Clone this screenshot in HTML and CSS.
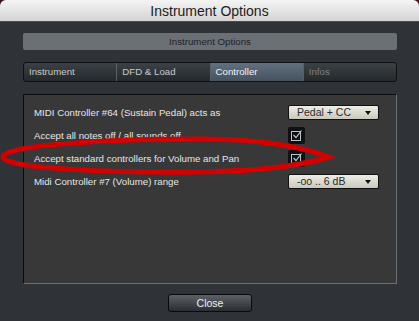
FILE: index.html
```html
<!DOCTYPE html>
<html lang="en">
<head>
    <meta charset="UTF-8">
    <title>Instrument Options</title>
    <link rel="stylesheet" href="styles.css">
</head>
<body>
<div class=window>
    <div class=titlebar>Instrument Options</div>
    <div class=content>
        <div class=header>Instrument Options</div>
        <div class=tabs>
            <div class=tab>Instrument</div>
            <div class=tab>DFD &amp; Load</div>
            <div class="tab active">Controller</div>
            <div class="tab dim">Infos</div>
        </div>
        <div class=panel>
            <div class=row>
                <span>MIDI Controller #64 (Sustain Pedal) acts as</span>
                <div class=select>Pedal + CC</div>
            </div>
            <div class=row>
                <span>Accept all notes off / all sounds off</span>
                <div class=check><svg width="11" height="11" viewBox="0 0 11 11"><rect x="0.5" y="1.5" width="9" height="9" fill="none" stroke="#b8c4cc"/><path d="M2.5 5 L5 7.5 L10.5 0.5" fill="none" stroke="#b8c4cc" stroke-width="1.2"/></svg></div>
            </div>
            <div class=row>
                <span>Accept standard controllers for Volume and Pan</span>
                <div class=check><svg width="11" height="11" viewBox="0 0 11 11"><rect x="0.5" y="1.5" width="9" height="9" fill="none" stroke="#b8c4cc"/><path d="M2.5 5 L5 7.5 L10.5 0.5" fill="none" stroke="#b8c4cc" stroke-width="1.2"/></svg></div>
            </div>
            <div class=row>
                <span>Midi Controller #7 (Volume) range</span>
                <div class=select>-oo .. 6 dB</div>
            </div>
        </div>
        <div class=footer>
            <button class=close>Close</button>
        </div>
    </div>
    <svg class=mark width="419" height="321" viewBox="0 0 419 321">
        <path d="M200 139 C120 139 3 144 3 157 C3 169 120 173 200 172 C260 171 300 166 329 157 C300 146 260 139 200 139 Z"
              fill="none" stroke="#d40000" stroke-width="5"/>
    </svg>
</div>
</body>
</html>
```

FILE: styles.css
```css
html {
    font-family: "Liberation Sans", sans-serif;
}

body {
    margin: 0;
    background: #3a1414;
}

.window {
    position: relative;
    width: 419px;
    height: 321px;
    background: #2f3337;
    border-radius: 6px 6px 0 0;
    overflow: hidden;
}

.titlebar {
    height: 21px;
    line-height: 22px;
    text-align: center;
    font-size: 14px;
    color: #1c1c1c;
    background: linear-gradient(#f4f4f4, #d4d4d4);
    border-bottom: 1px solid #4a4a4a;
}

.content {
    display: flex;
    flex-direction: column;
    padding: 11px 22px 0 23px;
    font-size: 9.7px;
}

.header {
    height: 17px;
    line-height: 17px;
    text-align: center;
    color: #1e2226;
    background: #6b7075;
    border-radius: 2px;
}

.tabs {
    display: flex;
    margin-top: 12px;
    height: 18px;
    border: 1px solid #111;
    border-radius: 3px;
    background: linear-gradient(#3c4145, #25292c);
    overflow: hidden;
}

.tab {
    flex: 1;
    line-height: 18px;
    padding-left: 5px;
    color: #c6cacc;
    border-right: 1px solid #5a5f64;

    &:last-child {
        border-right: none;
    }
}

.active {
    color: #f2f4f6;
    background: linear-gradient(#62707e, #465260);
}

.dim {
    color: #7c8186;
}

.panel {
    margin-top: 12px;
    height: 182px;
    padding-top: 6px;
    background: #383838;
    border: 1px solid #0c0c0c;
    border-bottom-color: #6c7075;
    border-right-color: #6c7075;
}

.row {
    display: grid;
    grid-template-columns: 1fr 91px;
    align-items: center;
    height: 23px;
    padding: 0 17px 0 10px;
    color: #e6e6e6;
}

.select {
    position: relative;
    height: 13px;
    line-height: 13px;
    padding-left: 8px;
    color: #2a2a2a;
    font-size: 10.5px;
    background: linear-gradient(#eeeee6, #c8c8bc);
    border: 1px solid #111;
    border-radius: 2px;

    &::after {
        content: '';
        position: absolute;
        right: 7px;
        top: 5px;
        border: 3px solid transparent;
        border-top: 4px solid #111;
        border-bottom: none;
    }
}

.check {
    display: flex;
    align-items: center;
    justify-content: center;
    width: 17px;
    height: 17px;
    background: #0e1012;
    border-radius: 2px;
}

.footer {
    display: flex;
    justify-content: center;
    margin-top: 10px;
}

.close {
    width: 84px;
    height: 18px;
    padding: 0;
    font-family: "Liberation Sans", sans-serif;
    font-size: 10.5px;
    color: #f0f0f0;
    background: linear-gradient(#5c6166, #2a2e32);
    border: 1px solid #0a0a0a;
    border-radius: 3px;
}

.mark {
    position: absolute;
    left: 0;
    top: 0;
    pointer-events: none;
}
```
